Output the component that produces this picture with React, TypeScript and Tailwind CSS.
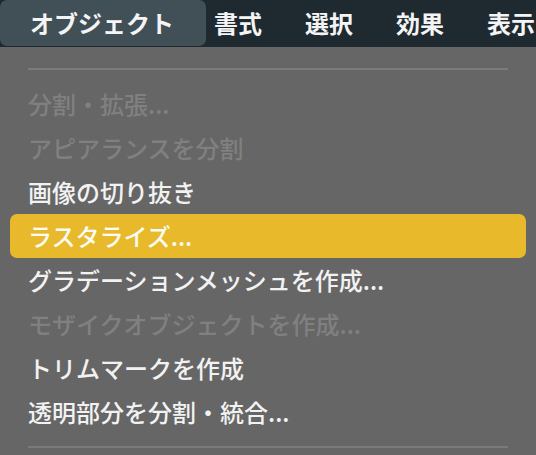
const menus = ['書式', '選択', '効果', '表示'];

type Item = { label: string; disabled?: boolean; active?: boolean };

const items: Item[] = [
  { label: '分割・拡張...', disabled: true },
  { label: 'アピアランスを分割', disabled: true },
  { label: '画像の切り抜き' },
  { label: 'ラスタライズ...', active: true },
  { label: 'グラデーションメッシュを作成...' },
  { label: 'モザイクオブジェクトを作成...', disabled: true },
  { label: 'トリムマークを作成' },
  { label: '透明部分を分割・統合...' },
];

export default function App() {
  return (
    <div
      className="w-[536px] h-[455px] overflow-hidden bg-[#666666]"
      style={{ fontFamily: '"Noto Sans CJK JP", "Noto Sans", sans-serif' }}
    >
      <div className="h-[47px] bg-[#1e2a30] flex items-start text-[24px] font-semibold text-[#f4f4f4] whitespace-nowrap">
        <div className="h-[46px] w-[206px] shrink-0 rounded-[7px] bg-[#414f57] flex items-center pl-[30px]">
          オブジェクト
        </div>
        <div className="h-[46px] flex items-center gap-[43px] ml-[8px]">
          {menus.map((m) => (
            <span key={m}>{m}</span>
          ))}
        </div>
      </div>

      <div className="pt-[21px]">
        <div className="mx-[28px] h-[2px] bg-[#7b7b7b]" />
        <div className="mt-[12px] flex flex-col">
          {items.map((it) => (
            <div
              key={it.label}
              className={
                'h-[44px] mx-[10px] px-[18px] rounded-[7px] flex items-center text-[24px] font-medium whitespace-nowrap ' +
                (it.active
                  ? 'bg-[#e8b92a] text-[#fbfbf5]'
                  : it.disabled
                  ? 'text-[#808080]'
                  : 'text-[#f2f2f2]')
              }
            >
              {it.label}
            </div>
          ))}
        </div>
        <div className="mt-[12px] mx-[28px] h-[2px] bg-[#7b7b7b]" />
      </div>
    </div>
  );
}
